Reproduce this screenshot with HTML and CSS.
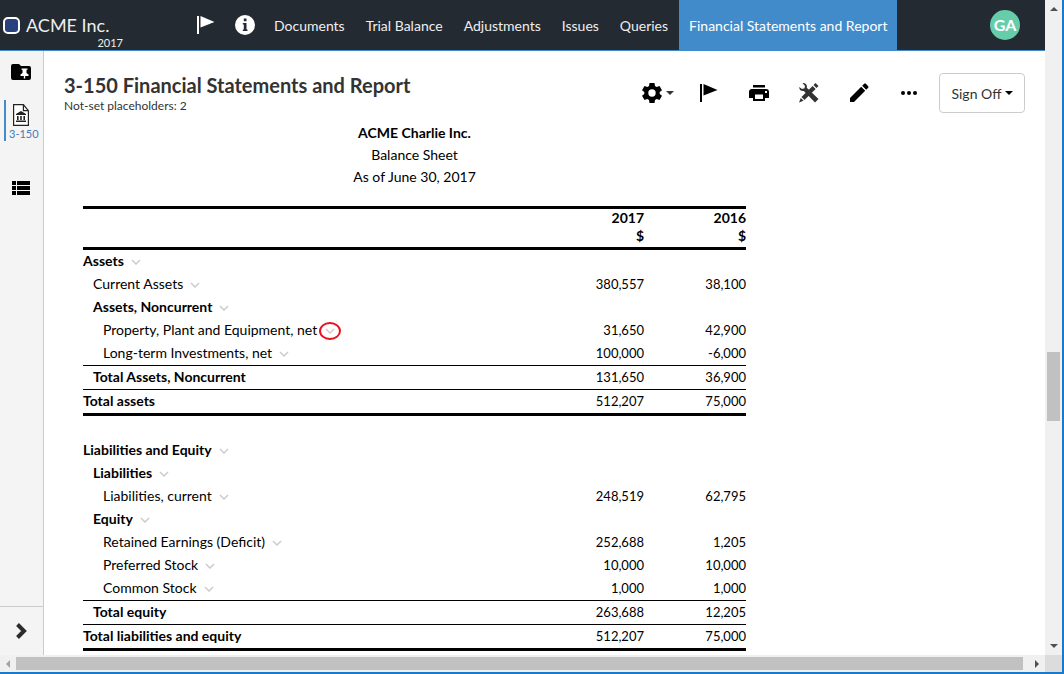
FILE: index.html
```html
<!DOCTYPE html>
<html lang="en">
<head>
<meta charset="utf-8">
<title>3-150 Financial Statements and Report</title>
<link rel="stylesheet" href="styles.css">
</head>
<body>
<svg class="symbols" aria-hidden="true">
  <symbol id="flag" viewBox="0 0 20 20"><path d="M1 1h2v18H1zM4.500 1l14 6-14 5.500z"/></symbol>
  <symbol id="chev" viewBox="0 0 10 6"><path d="M1 1l4 4 4-4" fill="none" stroke="#ccc" stroke-width="1.5"/></symbol>
</svg>
<div class="window">
  <div class="app">
    <header class="topbar">
      <a class="brand" href="#">
        <span class="brand-name"><span class="brand-mark"></span>ACME Inc.</span>
        <span class="brand-year">2017</span>
      </a>
      <button class="top-icon" aria-label="Flag"><svg width="20" height="20"><use href="#flag"/></svg></button>
      <button class="top-icon info" aria-label="Information"><svg width="20" height="20" viewBox="0 0 20 20"><circle cx="10" cy="10" r="10"/><path fill="#232a32" d="M8.800 3.500h2.700v2.700H8.800zM7.800 8h3.700v6.500h1v1.500H7.800v-1.500h1v-5h-1z"/></svg></button>
      <nav class="nav">
        <a href="#">Documents</a>
        <a href="#">Trial Balance</a>
        <a href="#">Adjustments</a>
        <a href="#">Issues</a>
        <a href="#">Queries</a>
        <a class="current" href="#">Financial Statements and Report</a>
      </nav>
      <button class="avatar">GA</button>
    </header>
    <div class="body">
      <aside class="side">
        <button class="side-item" aria-label="Pinned folder"><svg width="20" height="16" viewBox="0 0 20 16"><path d="M2 0h6l2 2h8a2 2 0 0 1 2 2v10a2 2 0 0 1-2 2H2a2 2 0 0 1-2-2V2a2 2 0 0 1 2-2z"/><path fill="#fff" d="M10.500 4.500h6v1.200h-1v3.300l2 1.500v1.500h-3.300V14.500h-1.400V12H9.500v-1.500l2-1.500V5.700h-1z"/></svg></button>
        <a class="side-item selected" href="#"><svg width="16" height="22" viewBox="0 0 16 22"><path fill="#fff" stroke="#222" stroke-width="1.200" d="M.6.6h9.800l5 6v14.800H.6zM10.400.6v6h5"/><path fill="#222" d="M8 7l5 3v1H3v-1zM4 12h1.600v4H4zM7.200 12h1.600v4H7.200zM10.400 12H12v4h-1.600zM3 16.500h10V18H3z"/></svg><span>3-150</span></a>
        <button class="side-item list" aria-label="List"><svg width="18" height="14" viewBox="0 0 18 14"><path d="M0 0h4v4H0zM5 0h13v4H5zM0 5h4v4H0zM5 5h13v4H5zM0 10h4v4H0zM5 10h13v4H5z"/></svg></button>
        <button class="expand" aria-label="Expand"><svg width="12" height="16" viewBox="0 0 12 16"><path fill="none" stroke="#2b2b2b" stroke-width="4" d="M1.500 1.500L8 8l-6.500 6.500"/></svg></button>
      </aside>
      <main class="page">
        <div class="page-head">
          <div class="heading">
            <h1>3-150 Financial Statements and Report</h1>
            <p>Not-set placeholders: 2</p>
          </div>
          <div class="tools">
            <button class="tool" aria-label="Settings"><svg width="34" height="20" viewBox="0 0 34 20"><path fill-rule="evenodd" d="M7.500 0h5l.5 3 1.700 1 2.800-1.100 2.500 4.300-2.300 1.800v2l2.300 1.800-2.500 4.300L14.700 16l-1.700 1-.5 3h-5L7 17l-1.700-1-2.800 1.100L0 12.800 2.300 11V9L0 7.200l2.500-4.300L5.300 4 7 3zM10 6.300a3.700 3.700 0 1 0 0 7.400 3.700 3.700 0 0 0 0-7.400z"/><path fill="#333" d="M24 8h8l-4 4z"/></svg></button>
            <button class="tool" aria-label="Flag page"><svg width="20" height="20"><use href="#flag"/></svg></button>
            <button class="tool" aria-label="Print"><svg width="20" height="16" viewBox="0 0 20 16"><path d="M4 0h12v2.500H4z"/><path fill-rule="evenodd" d="M3 4h14a3 3 0 0 1 3 3v6h-4v3H4v-3H0V7a3 3 0 0 1 3-3zM6 9.500V14h8V9.500zM16 6v2h2V6z"/></svg></button>
            <button class="tool" aria-label="Tools"><svg width="20" height="20" viewBox="0 0 20 20" fill="#333"><path d="M3.500 0c3-.4 5 2 4.300 4.800L19.500 16 16 19.500 4.800 8C2.500 8.500 0 7 .3 4L3 6l2.500-.8L6 3z"/><path d="M16.500 0L19.500 3l-2 2-3-3zM13.600 2.900l3 3L5.500 17l-3-3zM1.800 15l2.700 2.700L0 19.500z"/></svg></button>
            <button class="tool" aria-label="Edit"><svg width="20" height="20" viewBox="0 0 20 20"><path d="M1 15L12.200 3.800l4 4L5 19H1zM13.200 2.800L15 1c.6-.6 1.500-.6 2.100 0L19 2.900c.6.600.6 1.500 0 2.100l-1.800 1.800z"/></svg></button>
            <button class="tool" aria-label="More"><svg width="16" height="4" viewBox="0 0 16 4"><circle cx="2" cy="2" r="2"/><circle cx="8" cy="2" r="2"/><circle cx="14" cy="2" r="2"/></svg></button>
          </div>
          <button class="signoff">Sign Off<svg width="8" height="4" viewBox="0 0 8 4"><path d="M0 0h8L4 4z"/></svg></button>
        </div>
        <section class="sheet">
          <header class="sheet-title">
            <h2>ACME Charlie Inc.</h2>
            <p>Balance Sheet</p>
            <p>As of June 30, 2017</p>
          </header>
          <table class="report">
            <thead>
              <tr><th class="label"></th><th>2017<br>$</th><th>2016<br>$</th></tr>
            </thead>
            <tbody>
              <tr class="group"><td>Assets<button class="menu" aria-label="Assets menu"><svg width="10" height="6"><use href="#chev"/></svg></button></td><td></td><td></td></tr>
              <tr class="in1"><td>Current Assets<button class="menu" aria-label="Current Assets menu"><svg width="10" height="6"><use href="#chev"/></svg></button></td><td>380,557</td><td>38,100</td></tr>
              <tr class="group in1"><td>Assets, Noncurrent<button class="menu" aria-label="Assets, Noncurrent menu"><svg width="10" height="6"><use href="#chev"/></svg></button></td><td></td><td></td></tr>
              <tr class="in2"><td>Property, Plant and Equipment, net<button class="menu marked" aria-label="Property menu"><svg width="10" height="6"><use href="#chev"/></svg></button></td><td>31,650</td><td>42,900</td></tr>
              <tr class="in2"><td>Long-term Investments, net<button class="menu" aria-label="Investments menu"><svg width="10" height="6"><use href="#chev"/></svg></button></td><td>100,000</td><td>-6,000</td></tr>
              <tr class="total in1"><td>Total Assets, Noncurrent</td><td>131,650</td><td>36,900</td></tr>
              <tr class="total grand"><td>Total assets</td><td>512,207</td><td>75,000</td></tr>
              <tr class="spacer"><td colspan="3"></td></tr>
              <tr class="group"><td>Liabilities and Equity<button class="menu" aria-label="Liabilities and Equity menu"><svg width="10" height="6"><use href="#chev"/></svg></button></td><td></td><td></td></tr>
              <tr class="group in1"><td>Liabilities<button class="menu" aria-label="Liabilities menu"><svg width="10" height="6"><use href="#chev"/></svg></button></td><td></td><td></td></tr>
              <tr class="in2"><td>Liabilities, current<button class="menu" aria-label="Current liabilities menu"><svg width="10" height="6"><use href="#chev"/></svg></button></td><td>248,519</td><td>62,795</td></tr>
              <tr class="group in1"><td>Equity<button class="menu" aria-label="Equity menu"><svg width="10" height="6"><use href="#chev"/></svg></button></td><td></td><td></td></tr>
              <tr class="in2"><td>Retained Earnings (Deficit)<button class="menu" aria-label="Retained Earnings menu"><svg width="10" height="6"><use href="#chev"/></svg></button></td><td>252,688</td><td>1,205</td></tr>
              <tr class="in2"><td>Preferred Stock<button class="menu" aria-label="Preferred Stock menu"><svg width="10" height="6"><use href="#chev"/></svg></button></td><td>10,000</td><td>10,000</td></tr>
              <tr class="in2"><td>Common Stock<button class="menu" aria-label="Common Stock menu"><svg width="10" height="6"><use href="#chev"/></svg></button></td><td>1,000</td><td>1,000</td></tr>
              <tr class="total in1"><td>Total equity</td><td>263,688</td><td>12,205</td></tr>
              <tr class="total grand"><td>Total liabilities and equity</td><td>512,207</td><td>75,000</td></tr>
            </tbody>
          </table>
        </section>
      </main>
    </div>
  </div>
  <div class="vbar">
    <svg width="8" height="4" viewBox="0 0 8 4"><path d="M0 4h8L4 0z"/></svg>
    <div class="vtrack"><div class="vthumb"></div></div>
    <svg width="8" height="4" viewBox="0 0 8 4"><path d="M0 0h8L4 4z"/></svg>
  </div>
  <div class="hbar">
    <svg width="4" height="8" viewBox="0 0 4 8"><path fill="#a3a3a3" d="M4 0v8L0 4z"/></svg>
    <div class="hthumb"></div>
    <svg width="4" height="8" viewBox="0 0 4 8"><path d="M0 0v8l4-4z"/></svg>
  </div>
  <div class="corner"></div>
</div>
</body>
</html>
```
FILE: styles.css
```css
* { box-sizing: border-box; }
body { margin: 0; font-family: Lato, "Liberation Sans", sans-serif; color: #333; }
h1, h2, p { margin: 0; }
button { border: 0; padding: 0; background: none; font: inherit; color: inherit; cursor: pointer; }
a { color: inherit; text-decoration: none; }
svg { display: block; flex: none; }
.symbols { position: absolute; width: 0; height: 0; }

.window {
  display: grid;
  grid-template: minmax(0, 1fr) 17px / minmax(0, 1fr) 17px;
  height: 100vh;
  border-right: 2px solid #1979ca;
  border-bottom: 2px solid #1979ca;
}
.app { display: flex; flex-direction: column; min-height: 0; overflow: hidden; background: #fff; }

.topbar {
  display: flex;
  flex: none;
  align-items: center;
  height: 51px;
  padding-right: 25px;
  background: #232a32;
  border-bottom: 1px solid #428bca;
  color: #eee;
}
.brand { display: flex; flex-direction: column; width: 123px; margin-right: 73px; padding-top: 14px; }
.brand-name { display: flex; align-items: center; gap: 6px; padding-left: 3px; font-size: 18px; line-height: 22px; }
.brand-mark { width: 17px; height: 17px; border: 2px solid #fff; border-radius: 5px; background: #27427f; }
.brand-year { font-size: 11px; line-height: 14px; text-align: right; }
.top-icon { fill: #fff; }
.info { margin-left: 19px; }
.nav { display: flex; gap: 1px; align-self: stretch; margin: 0 auto -1px 9px; }
.nav a { display: flex; align-items: center; padding: 0 10px; font-size: 14px; white-space: nowrap; }
.nav .current { background: #428bca; color: #fff; }
.avatar { width: 30px; height: 30px; padding-bottom: 2px; border-radius: 50%; background: #66cdaa; color: #fff; font-size: 16px; font-weight: 700; }

.body { display: flex; flex: 1; min-height: 0; }
.side { display: flex; flex-direction: column; flex: none; width: 44px; padding-top: 13px; background: #f4f4f4; border-right: 1px solid #ccc; }
.side-item { display: flex; flex-direction: column; align-items: center; padding-right: 2px; }
.selected { align-items: flex-start; margin: 20px 0 40px 4px; padding: 4px 0 0 3px; border-left: 2px solid #428bca; color: #4a7ab5; font-size: 11px; line-height: 15px; }
.selected svg { margin-left: 4px; }
.expand { display: flex; align-items: center; justify-content: center; height: 49px; margin-top: auto; border-top: 1px solid #ccc; }

.page { flex: 1; min-width: 0; padding: 20px 20px 0; }
.page-head { display: flex; }
.heading { flex: 1; }
h1 { font-size: 20px; line-height: 28px; }
.heading p { font-size: 12px; line-height: 14px; }
.tools { display: flex; align-items: center; height: 44px; }
.tool { display: flex; align-items: center; justify-content: center; width: 50px; }
.signoff {
  display: flex;
  align-items: center;
  justify-content: center;
  gap: 3px;
  width: 86px;
  height: 40px;
  margin: 2px 0 0 5px;
  border: 1px solid #ccc;
  border-radius: 4px;
  font-size: 14px;
}

.sheet { width: 663px; margin: 7px 0 0 19px; color: #000; font-size: 14px; }
.sheet-title { text-align: center; line-height: 22px; }
h2 { font-size: 14px; line-height: 22px; }
.report { width: 100%; margin-top: 18px; border-collapse: separate; border-spacing: 0; }
th, td { height: 23px; line-height: 18px; text-align: right; }
th { padding: 0 0 2px; border: solid #000; border-width: 3px 0; vertical-align: top; }
td { padding: 0 0 2px; font-size: 13px; }
td:first-child { font-size: 14px; text-align: left; white-space: nowrap; }
th:nth-child(2), td:nth-child(2) { width: 200px; }
th:last-child, td:last-child { width: 102px; }
.group td:first-child, .total td:first-child { font-weight: 700; }
.in1 td:first-child { padding-left: 10px; }
.in2 td:first-child { padding-left: 20px; }
.total td { height: 24px; border-top: 1px solid #000; }
.grand td { height: 27px; border-bottom: 3px solid #000; }
.menu { display: inline-flex; margin-left: 7px; vertical-align: middle; }
.marked { margin: -5px 0 -5px 2px; padding: 4px; border: 2px solid #e8101c; border-radius: 50%; }

.vbar, .hbar { display: flex; align-items: center; background: #f0f0f0; fill: #505050; }
.vbar { flex-direction: column; padding: 7px 0; }
.vtrack { display: grid; flex: 1; grid-template-rows: 341fr 69fr 223fr; width: 13px; }
.vthumb { grid-row: 2; background: #c1c1c1; }
.hbar { padding: 0 6px; gap: 6px; }
.hthumb { flex: 1; height: 13px; margin-right: 6px; background: #c1c1c1; }
.corner { background: #dcdcdc; }
```
